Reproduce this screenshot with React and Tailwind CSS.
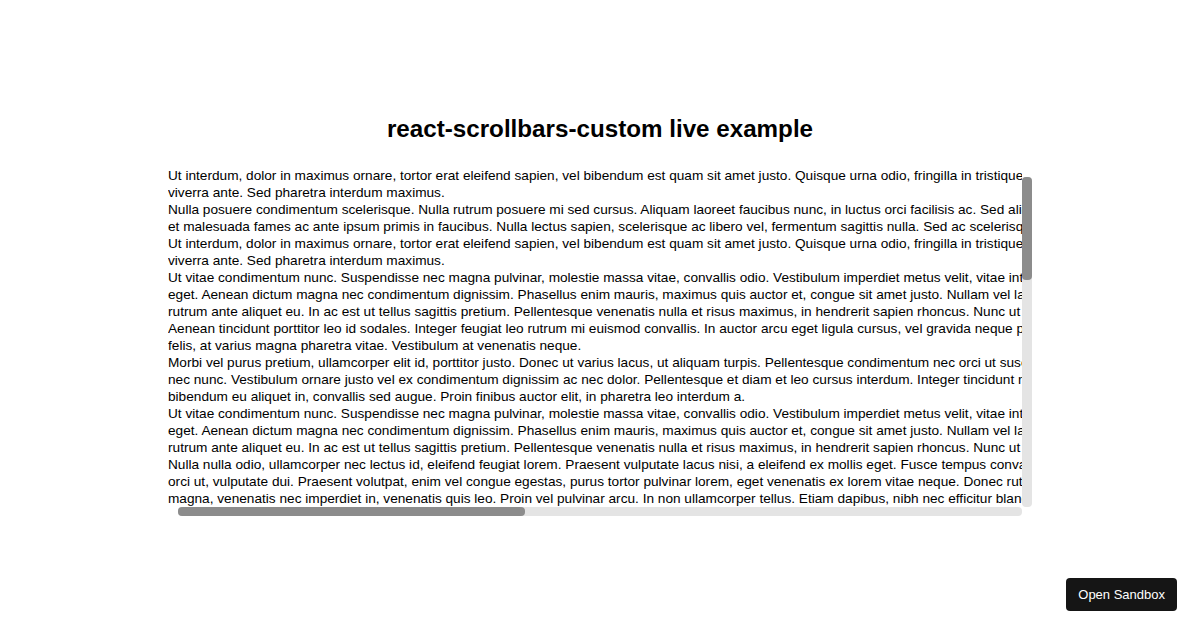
const lines = [
  'Ut interdum, dolor in maximus ornare, tortor erat eleifend sapien, vel bibendum est quam sit amet justo. Quisque urna odio, fringilla in tristique ac, dictum ut',
  'viverra ante. Sed pharetra interdum maximus.',
  'Nulla posuere condimentum scelerisque. Nulla rutrum posuere mi sed cursus. Aliquam laoreet faucibus nunc, in luctus orci facilisis ac. Sed aliquam ipsum primis in',
  'et malesuada fames ac ante ipsum primis in faucibus. Nulla lectus sapien, scelerisque ac libero vel, fermentum sagittis nulla. Sed ac scelerisque ligula, nec',
  'Ut interdum, dolor in maximus ornare, tortor erat eleifend sapien, vel bibendum est quam sit amet justo. Quisque urna odio, fringilla in tristique ac, dictum ut',
  'viverra ante. Sed pharetra interdum maximus.',
  'Ut vitae condimentum nunc. Suspendisse nec magna pulvinar, molestie massa vitae, convallis odio. Vestibulum imperdiet metus velit, vitae interdum tellus',
  'eget. Aenean dictum magna nec condimentum dignissim. Phasellus enim mauris, maximus quis auctor et, congue sit amet justo. Nullam vel lacus eu nisi',
  'rutrum ante aliquet eu. In ac est ut tellus sagittis pretium. Pellentesque venenatis nulla et risus maximus, in hendrerit sapien rhoncus. Nunc ut tempus',
  'Aenean tincidunt porttitor leo id sodales. Integer feugiat leo rutrum mi euismod convallis. In auctor arcu eget ligula cursus, vel gravida neque pretium. Sed',
  'felis, at varius magna pharetra vitae. Vestibulum at venenatis neque.',
  'Morbi vel purus pretium, ullamcorper elit id, porttitor justo. Donec ut varius lacus, ut aliquam turpis. Pellentesque condimentum nec orci ut suscipit. Sed',
  'nec nunc. Vestibulum ornare justo vel ex condimentum dignissim ac nec dolor. Pellentesque et diam et leo cursus interdum. Integer tincidunt nisl sed',
  'bibendum eu aliquet in, convallis sed augue. Proin finibus auctor elit, in pharetra leo interdum a.',
  'Ut vitae condimentum nunc. Suspendisse nec magna pulvinar, molestie massa vitae, convallis odio. Vestibulum imperdiet metus velit, vitae interdum tellus',
  'eget. Aenean dictum magna nec condimentum dignissim. Phasellus enim mauris, maximus quis auctor et, congue sit amet justo. Nullam vel lacus eu nisi',
  'rutrum ante aliquet eu. In ac est ut tellus sagittis pretium. Pellentesque venenatis nulla et risus maximus, in hendrerit sapien rhoncus. Nunc ut tempus',
  'Nulla nulla odio, ullamcorper nec lectus id, eleifend feugiat lorem. Praesent vulputate lacus nisi, a eleifend ex mollis eget. Fusce tempus convallis',
  'orci ut, vulputate dui. Praesent volutpat, enim vel congue egestas, purus tortor pulvinar lorem, eget venenatis ex lorem vitae neque. Donec rutrum',
  'magna, venenatis nec imperdiet in, venenatis quis leo. Proin vel pulvinar arcu. In non ullamcorper tellus. Etiam dapibus, nibh nec efficitur blandit',
];

export default function App() {
  return (
    <div className="relative w-[1200px] h-[630px] bg-white font-['Liberation_Sans',Arial,sans-serif] text-black">
      <div className="pt-[113px] flex flex-col items-center">
        <h1 className="text-[24.2px] leading-[32px] font-bold">react-scrollbars-custom live example</h1>
        {/* scroll area */}
        <div className="relative mt-[22px] w-[864px] h-[350px] overflow-hidden">
          <div className="w-[854px] h-[340px] overflow-hidden text-[13.65px] leading-[17px]">
            {lines.map((l, i) => (
              <div key={i} className="whitespace-nowrap">{l}</div>
            ))}
          </div>
          {/* vertical track */}
          <div className="absolute right-0 top-[10px] bottom-[10px] w-[10px] rounded-[4px] bg-[#e4e4e4]">
            <div className="h-[103px] w-full rounded-[4px] bg-[#8c8c8c]"></div>
          </div>
          {/* horizontal track */}
          <div className="absolute left-[10px] right-[10px] bottom-[1px] h-[9px] rounded-[4px] bg-[#e4e4e4]">
            <div className="w-[347px] h-full rounded-[4px] bg-[#8c8c8c]"></div>
          </div>
        </div>
      </div>
      <button className="absolute right-[23px] bottom-[19px] h-[33px] px-[12px] rounded-[4px] bg-[#151515] text-white text-[13px]">
        Open Sandbox
      </button>
    </div>
  );
}
